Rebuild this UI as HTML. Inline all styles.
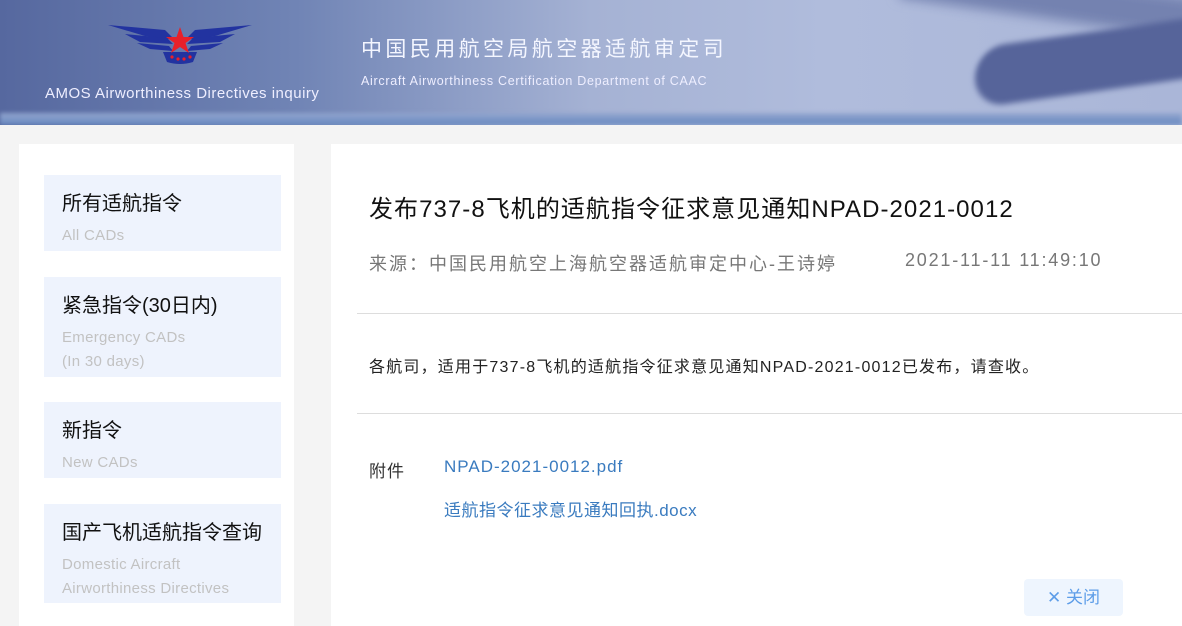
<!DOCTYPE html>
<html><head><meta charset="utf-8"><style>
*{margin:0;padding:0;box-sizing:border-box}
body{width:1182px;height:626px;overflow:hidden;background:#f4f4f4;font-family:"Liberation Sans","Noto Sans CJK SC",sans-serif;position:relative}
.hdr{position:absolute;left:0;top:0;width:1182px;height:125px;background:linear-gradient(90deg,#56689f 0%,#7084b5 25%,#a5b2d4 50%,#b0bcdc 70%,#aab6d8 100%);overflow:hidden}
.hdr .wing{position:absolute;left:975px;top:30px;width:260px;height:60px;background:#56649a;border-radius:30px 0 0 30px;transform:skewY(-8deg);filter:blur(3px)}
.hdr .wing2{position:absolute;left:900px;top:-20px;width:320px;height:40px;background:#7482b0;transform:rotate(8deg);filter:blur(6px)}
.hdr .bot{position:absolute;left:0;top:113px;width:1182px;height:12px;background:linear-gradient(#95a7cf,#6688c0);filter:blur(2px)}
.t{position:absolute;white-space:nowrap}
.side{position:absolute;left:19px;top:144px;width:275px;height:482px;background:#fff}
.item{position:absolute;left:25px;width:237px;background:#eef3fd;padding:16px 0 0 18px}
.item .c{font-size:20px;color:#111;line-height:26px}
.item .e{font-size:15px;color:#c2c2c2;line-height:24px;margin-top:7px;letter-spacing:.3px}
.main{position:absolute;left:331px;top:144px;width:851px;height:482px;background:#fff}
.hr{position:absolute;left:26px;right:0;height:1px;background:#ddd}
a{color:#3a7bbf;text-decoration:none}
</style></head><body>
<div class="hdr">
<div class="wing2"></div><div class="wing"></div><div class="bot"></div>
<svg class="t" style="left:105px;top:22px" width="150" height="45" viewBox="0 0 150 45">
<g fill="#2233a0">
<path d="M3 3 L60 8 L70 18 L40 14 Z"/><path d="M147 3 L90 8 L80 18 L110 14 Z"/>
<path d="M20 12 L62 16 L68 22 L35 20 Z"/><path d="M130 12 L88 16 L82 22 L115 20 Z"/>
<path d="M32 21 L64 24 L68 29 L45 27 Z"/><path d="M118 21 L86 24 L82 29 L105 27 Z"/>
<path d="M58 30 L92 30 L88 40 Q75 44 62 40 Z"/>
</g>
<path fill="#e8202a" d="M75 5 L78.5 15 L89 15 L80.5 21 L84 31 L75 25 L66 31 L69.5 21 L61 15 L71.5 15 Z"/>
<g fill="#e8202a"><circle cx="67" cy="35" r="1.6"/><circle cx="73" cy="37" r="1.6"/><circle cx="79" cy="37" r="1.6"/><circle cx="85" cy="35" r="1.6"/></g>
</svg>
<div class="t" style="left:45px;top:85px;font-size:15px;color:#eef;letter-spacing:.5px">AMOS Airworthiness Directives inquiry</div>
<div class="t" style="left:361px;top:33px;font-size:21px;color:#f4f6ff;letter-spacing:3.4px">中国民用航空局航空器适航审定司</div>
<div class="t" style="left:361px;top:74px;font-size:12.5px;color:#eef;letter-spacing:.7px">Aircraft Airworthiness Certification Department of CAAC</div>
</div>
<div class="side">
<div class="item" style="top:31px;height:76px"><div class="c">所有适航指令</div><div class="e">All CADs</div></div>
<div class="item" style="top:133px;height:100px"><div class="c">紧急指令(30日内)</div><div class="e">Emergency CADs<br>(In 30 days)</div></div>
<div class="item" style="top:258px;height:76px"><div class="c">新指令</div><div class="e">New CADs</div></div>
<div class="item" style="top:360px;height:99px"><div class="c">国产飞机适航指令查询</div><div class="e">Domestic Aircraft<br>Airworthiness Directives</div></div>
</div>
<div class="main">
<div class="t" style="left:38px;top:45px;font-size:24px;color:#111;letter-spacing:1.05px">发布737-8飞机的适航指令征求意见通知NPAD-2021-0012</div>
<div class="t" style="left:38px;top:106px;font-size:18px;color:#777;letter-spacing:2px">来源：中国民用航空上海航空器适航审定中心-王诗婷</div>
<div class="t" style="left:574px;top:106px;font-size:18px;color:#777;letter-spacing:1.8px">2021-11-11 11:49:10</div>
<div class="hr" style="top:169px"></div>
<div class="t" style="left:38px;top:209px;font-size:16px;color:#222;letter-spacing:1.2px">各航司，适用于737-8飞机的适航指令征求意见通知NPAD-2021-0012已发布，请查收。</div>
<div class="hr" style="top:269px"></div>
<div class="t" style="left:38px;top:313px;font-size:17px;color:#333;letter-spacing:1px">附件</div>
<div class="t" style="left:113px;top:313px;font-size:17px;letter-spacing:1px"><a>NPAD-2021-0012.pdf</a></div>
<div class="t" style="left:113px;top:352px;font-size:17px;letter-spacing:.5px"><a>适航指令征求意见通知回执.docx</a></div>
<div class="t" style="left:693px;top:435px;width:99px;height:37px;background:#eef5fe;border-radius:4px;font-size:17px;color:#5d9de8;text-align:center;line-height:37px">✕ 关闭</div>
</div>
</body></html>
